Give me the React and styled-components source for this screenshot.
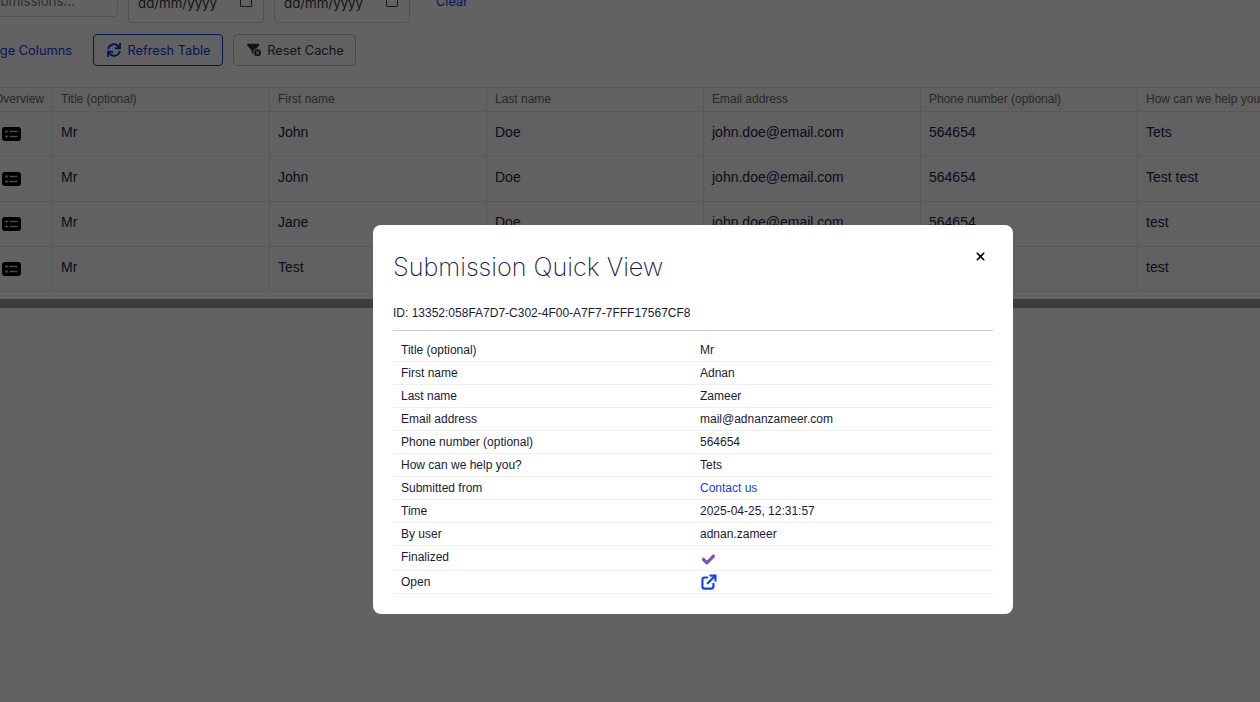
import React from 'react';
import styled, { createGlobalStyle } from 'styled-components';
import { FaSync, FaCheck } from 'react-icons/fa';
import { FaFilterCircleXmark, FaXmark } from 'react-icons/fa6';

const GlobalStyle = createGlobalStyle`
  html, body {
    margin: 0;
    height: 100%;
    overflow: hidden;
    background: #f6f6f6;
    font-family: "Liberation Sans", Arial, sans-serif;
    color: #1a1a33;
  }
`;

const Page = styled.div`
  width: 1500px;
  margin: -13px 0 0 -25px;
`;

const Filters = styled.div`
  display: flex;
  align-items: flex-start;
  gap: 10px;
`;

const SearchBox = styled.div`
  width: 143px;
  height: 30px;
  box-sizing: border-box;
  border: 1px solid #ccc;
  border-radius: 4px;
  display: flex;
  align-items: center;
  justify-content: flex-end;
  padding: 0 42px 2px 0;
  font-family: Inter, sans-serif;
  font-size: 13.3px;
  color: #777;
`;

const DateBox = styled.div`
  width: 136px;
  height: 36px;
  box-sizing: border-box;
  border: 1px solid #ccc;
  border-radius: 4px;
  display: flex;
  align-items: center;
  justify-content: space-between;
  padding: 0 11px 4px 9px;
  font-family: Inter, sans-serif;
  font-size: 13.3px;
  color: #333;
`;

const CalendarGlyph = styled.span`
  width: 10px;
  height: 11px;
  border: 1px solid #333;
  border-radius: 1px;
  margin-bottom: 6px;
`;

const ClearLink = styled.a`
  font-family: Inter, sans-serif;
  font-size: 12.8px;
  color: #0d35d8;
  margin: 7px 0 0 16px;
`;

const Actions = styled.div`
  display: flex;
  align-items: center;
  gap: 10px;
  margin-top: 11px;
`;

const LinkButton = styled.a`
  width: 97px;
  display: flex;
  justify-content: flex-end;
  margin-right: 11px;
  font-family: Inter, sans-serif;
  font-size: 12.8px;
  color: #0d35d8;
  white-space: nowrap;
`;

const Button = styled.button`
  height: 32px;
  box-sizing: border-box;
  width: ${(p) => p.$width}px;
  border: 1px solid ${(p) => (p.$primary ? '#0d35d8' : '#bbb')};
  border-radius: 4px;
  background: transparent;
  color: ${(p) => (p.$primary ? '#0d35d8' : '#333')};
  font-family: Inter, sans-serif;
  font-size: 12.8px;
  display: flex;
  align-items: center;
  justify-content: center;
  gap: 6px;
  padding: 0 0 0 2px;

  svg {
    font-size: 14px;
    flex: none;
  }
`;

const TableWrap = styled.div`
  margin-top: 21px;
  padding-bottom: 7px;
`;

const Row = styled.div`
  display: grid;
  grid-template-columns: 78px repeat(6, 217px);
  border-top: ${(p) => (p.$head ? '1px solid #ddd' : '0')};
  border-bottom: 1px solid #ddd;
  height: ${(p) => (p.$head ? 25 : 45)}px;
  box-sizing: border-box;
  background: #f2f2f2;
`;

const HeadCell = styled.div`
  font-size: 12px;
  color: #666;
  padding: 4px 8px 0;
  border-right: 1px solid #ddd;
  white-space: nowrap;
  overflow: hidden;
  text-align: ${(p) => (p.$end ? 'right' : 'left')};
`;

const Cell = styled.div`
  font-size: 14px;
  color: #222244;
  padding: 12px 8px 0;
  border-right: 1px solid #ddd;
  white-space: nowrap;
`;

const IconCell = styled(Cell)`
  padding: 15px 0 0 27px;
  color: #000;

  svg {
    display: block;
  }
`;

const Scrollbar = styled.div`
  height: 9px;
  background: #9a9a9a;
  margin-left: 25px;
  width: 1260px;
`;

const Overlay = styled.div`
  position: fixed;
  inset: 0;
  background: rgba(0, 0, 0, 0.6);
`;

const Modal = styled.div`
  position: fixed;
  left: 373px;
  top: 225px;
  width: 640px;
  height: 389px;
  box-sizing: border-box;
  padding: 20px;
  background: #fff;
  border-radius: 8px;
`;

const CloseButton = styled.span`
  position: absolute;
  top: 25px;
  right: 26px;
  color: #000;
  font-size: 13px;
  line-height: 1;

  svg {
    display: block;
  }
`;

const ModalTitle = styled.h2`
  margin: 0;
  padding-top: 5px;
  font-family: Inter, sans-serif;
  font-weight: 200;
  font-size: 25.2px;
  line-height: 34px;
  color: #1a1a4a;
`;

const IdLine = styled.div`
  margin-top: 22px;
  padding-bottom: 10px;
  border-bottom: 1px solid #ccc;
  font-size: 12px;
  line-height: 14px;
  color: #1a1a33;
`;

const Details = styled.div`
  margin-top: 8px;
`;

const DetailRow = styled.div`
  display: grid;
  grid-template-columns: 299px 1fr;
  height: ${(p) => p.$height || 23}px;
  box-sizing: border-box;
  border-bottom: 1px solid #eee;
  padding: 4px 8px 0;
  font-size: 12px;
  line-height: 14px;
  align-items: start;
`;

const DetailValue = styled.div`
  color: ${(p) => p.$color || '#1a1a33'};

  svg {
    display: block;
  }
`;

const FinalizedIcon = styled(FaCheck)`
  width: 13px;
  height: 13px;
  margin: 3px 0 0 2px;
  stroke: currentColor;
  stroke-width: 30;
`;

const OpenIconSvg = styled.svg`
  width: 16px;
  height: 16px;
  margin: -1px 0 0 1px;
  fill: none;
  stroke: currentColor;
  stroke-width: 2.4;
  stroke-linecap: round;
  stroke-linejoin: round;
`;

const OpenIcon = () => (
  <OpenIconSvg viewBox="0 0 18 18">
    <path d="M7 4H4a2.4 2.4 0 0 0-2.4 2.4V14A2.4 2.4 0 0 0 4 16.400h7.600A2.400 2.400 0 0 0 14 14v-3" />
    <path d="M7.500 10.500L16 2" />
    <path d="M10.500 1.800h5.800v5.800" />
  </OpenIconSvg>
);

const OverviewIcon = () => (
  <svg width="19" height="14" viewBox="0 0 19 14">
    <rect width="19" height="14" rx="3" fill="#000" />
    <circle cx="4.500" cy="4.500" r="1.300" fill="#bbb" />
    <circle cx="4.500" cy="9.500" r="1.300" fill="#bbb" />
    <rect x="7.500" y="3.800" width="8" height="1.400" fill="#bbb" />
    <rect x="7.500" y="8.800" width="8" height="1.400" fill="#bbb" />
  </svg>
);

const rows = [
  ['John', 'Doe', '564654', 'Tets'],
  ['John', 'Doe', '564654', 'Test test'],
  ['Jane', 'Doe', '564654', 'test'],
  ['Test', 'Doe', '564654', 'test'],
];

const details = [
  ['Title (optional)', 'Mr'],
  ['First name', 'Adnan'],
  ['Last name', 'Zameer'],
  ['Email address', 'mail@adnanzameer.com'],
  ['Phone number (optional)', '564654'],
  ['How can we help you?', 'Tets'],
  ['Submitted from', 'Contact us', '#1040ff'],
  ['Time', '2025-04-25, 12:31:57'],
  ['By user', 'adnan.zameer'],
];

const App = () => (
  <>
    <GlobalStyle />
    <Page>
      <Filters>
        <SearchBox>Submissions...</SearchBox>
        <DateBox>dd/mm/yyyy<CalendarGlyph /></DateBox>
        <DateBox>dd/mm/yyyy<CalendarGlyph /></DateBox>
        <ClearLink>Clear</ClearLink>
      </Filters>
      <Actions>
        <LinkButton>Manage Columns</LinkButton>
        <Button $primary $width={130}><FaSync />Refresh Table</Button>
        <Button $width={123}><FaFilterCircleXmark />Reset Cache</Button>
      </Actions>
      <TableWrap>
        <Row $head>
          <HeadCell $end>Overview</HeadCell>
          <HeadCell>Title (optional)</HeadCell>
          <HeadCell>First name</HeadCell>
          <HeadCell>Last name</HeadCell>
          <HeadCell>Email address</HeadCell>
          <HeadCell>Phone number (optional)</HeadCell>
          <HeadCell>How can we help you?</HeadCell>
        </Row>
        {rows.map((row, index) => (
          <Row key={index}>
            <IconCell><OverviewIcon /></IconCell>
            <Cell>Mr</Cell>
            <Cell>{row[0]}</Cell>
            <Cell>{row[1]}</Cell>
            <Cell>john.doe@email.com</Cell>
            <Cell>{row[2]}</Cell>
            <Cell>{row[3]}</Cell>
          </Row>
        ))}
      </TableWrap>
      <Scrollbar />
    </Page>
    <Overlay />
    <Modal>
      <CloseButton><FaXmark /></CloseButton>
      <ModalTitle>Submission Quick View</ModalTitle>
      <IdLine>ID: 13352:058FA7D7-C302-4F00-A7F7-7FFF17567CF8</IdLine>
      <Details>
        {details.map(([label, value, color]) => (
          <DetailRow key={label}>
            <div>{label}</div>
            <DetailValue $color={color}>{value}</DetailValue>
          </DetailRow>
        ))}
        <DetailRow $height={25}>
          <div>Finalized</div>
          <DetailValue $color="#7952b3"><FinalizedIcon /></DetailValue>
        </DetailRow>
        <DetailRow>
          <div>Open</div>
          <DetailValue $color="#1040ff"><OpenIcon /></DetailValue>
        </DetailRow>
      </Details>
    </Modal>
  </>
);

export default App;
